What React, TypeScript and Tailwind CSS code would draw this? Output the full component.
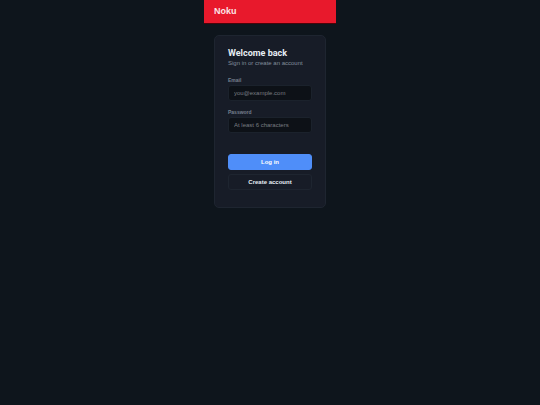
import { useState } from "react";
import clsx from "clsx";

interface FieldProps {
  id: string;
  label: string;
  type: string;
  placeholder: string;
  value: string;
  onChange: (value: string) => void;
}

function Field({ id, label, type, placeholder, value, onChange }: FieldProps) {
  return (
    <div className="flex flex-col">
      <label
        htmlFor={id}
        className="text-[5px] leading-[10px] font-semibold text-[#76808e]"
      >
        {label}
      </label>
      <input
        id={id}
        type={type}
        placeholder={placeholder}
        value={value}
        onChange={(e) => onChange(e.target.value)}
        className="h-4 w-full rounded-[3px] border border-[#1b222c] bg-[#0d1117] px-[5px] text-[6px] text-[#e6edf3] placeholder:text-[#797c82] outline-none focus:border-[#4f8ef9]"
      />
    </div>
  );
}

const buttonBase =
  "h-4 w-full rounded-[3px] border text-[6px] leading-none font-semibold cursor-pointer";

export default function App() {
  const [email, setEmail] = useState("");
  const [password, setPassword] = useState("");

  return (
    <div className="min-h-screen bg-[#0e151c] font-['Liberation_Sans',Arial,sans-serif] text-[#e6edf3]">
      <div className="mx-auto max-w-[132px]">
        <header className="h-6 border-b border-[#4a0309] bg-[#e8192c] px-[10px]">
          <h1 className="text-[9px] leading-[22px] font-bold text-[#fbe4e7]">Noku</h1>
        </header>

        <main className="px-[10px] pt-[11px]">
          <form
            onSubmit={(e) => e.preventDefault()}
            className="rounded-[5px] border border-[#1e2530] bg-[#171c27] px-[13px] pt-[13px] pb-[17px]"
          >
            <h2 className="font-[Roboto,Arial,sans-serif] text-[9px] leading-[9px] font-bold">
              Welcome back
            </h2>
            <p className="text-[6px] leading-[10px] text-[#848e9c]">
              Sign in or create an account
            </p>

            <div className="mt-[7px] flex flex-col gap-[6px]">
              <Field
                id="email"
                label="Email"
                type="email"
                placeholder="you@example.com"
                value={email}
                onChange={setEmail}
              />
              <Field
                id="password"
                label="Password"
                type="password"
                placeholder="At least 6 characters"
                value={password}
                onChange={setPassword}
              />
            </div>

            {/* Actions */}
            <div className="mt-[21px] flex flex-col gap-1">
              <button
                type="submit"
                className={clsx(buttonBase, "border-[#4f8ef9] bg-[#4f8ef9] text-white")}
              >
                Log in
              </button>
              <button
                type="button"
                className={clsx(buttonBase, "border-[#1e2530] bg-transparent")}
              >
                Create account
              </button>
            </div>
          </form>
        </main>
      </div>
    </div>
  );
}
